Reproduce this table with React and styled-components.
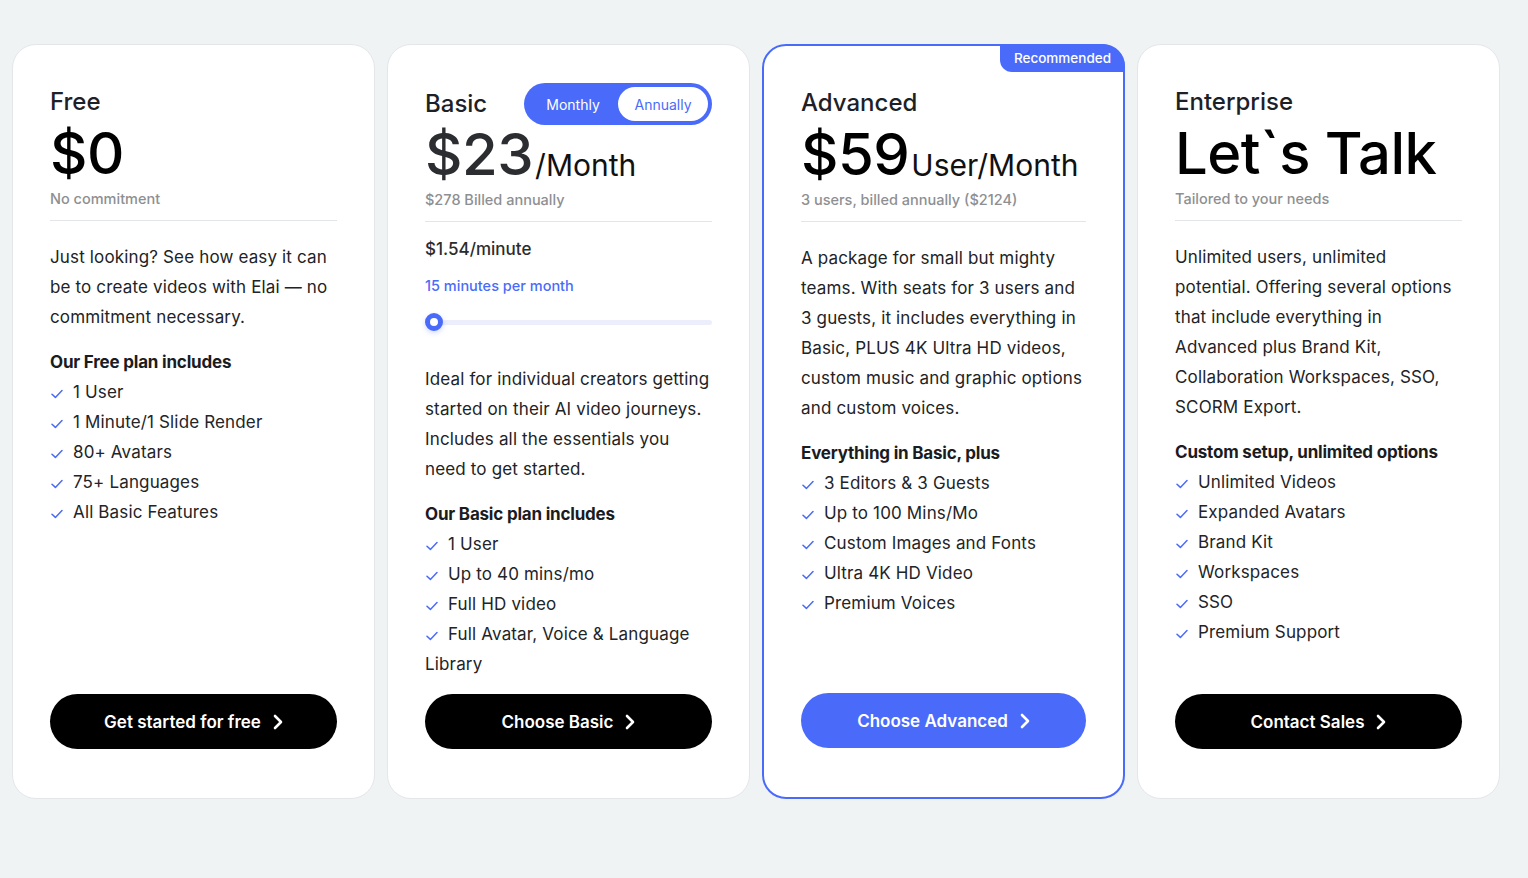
import React from "react";
import styled, { createGlobalStyle } from "styled-components";

const BLUE = "#4a6bfa";

const Global = createGlobalStyle`
  html, body { margin: 0; padding: 0; background: #f0f3f4; }
  body { font-family: Inter, "Noto Sans", sans-serif; color: #1d1f23; }
  * { box-sizing: border-box; }
`;

const Page = styled.div`
  display: grid;
  grid-template-columns: repeat(4, 363px);
  gap: 12px;
  padding: 44px 12px 79px;
`;

const Card = styled.div`
  position: relative;
  height: 755px;
  background: #fff;
  border: ${(p) => (p.$featured ? `2px solid ${BLUE}` : "1px solid #e4e7ea")};
  border-radius: 24px;
  padding: ${(p) => (p.$featured ? "41px 37px 49px" : "41px 37px 49px")};
  display: flex;
  flex-direction: column;
`;

const Badge = styled.div`
  position: absolute;
  top: -2px;
  right: -2px;
  height: 28px;
  padding: 0 14px 0 14px;
  display: flex;
  align-items: center;
  background: ${BLUE};
  color: #fff;
  font-size: 13.5px;
  font-weight: 500;
  border-radius: 0 22px 0 12px;
`;

const TitleRow = styled.div`
  display: flex;
  align-items: center;
  justify-content: space-between;
  height: ${(p) => (p.$tall ? "36px" : "32px")};
  margin-bottom: ${(p) => (p.$tall ? "-3px" : "0")};
`;

const Title = styled.div`
  font-size: 24px;
  font-weight: 500;
  line-height: 32px;
  color: #1d2127;
`;

const Toggle = styled.div`
  display: flex;
  align-items: center;
  width: 188px;
  height: 42px;
  border-radius: 21px;
  background: ${BLUE};
  padding: 4px;
`;

const ToggleOpt = styled.div`
  flex: 1;
  height: 100%;
  display: flex;
  align-items: center;
  justify-content: center;
  border-radius: 17px;
  font-size: 14px;
  font-weight: 400;
  background: ${(p) => (p.$active ? "#fff" : "transparent")};
  color: ${(p) => (p.$active ? BLUE : "#fff")};
`;

const PriceRow = styled.div`
  display: flex;
  align-items: baseline;
  margin-top: 2px;
  height: 66px;
`;

const Price = styled.span`
  font-size: 58px;
  font-weight: 500;
  line-height: 66px;
  letter-spacing: -0.5px;
  color: ${(p) => p.$color || "#000"};
`;

const Unit = styled.span`
  font-size: 30px;
  font-weight: 400;
  color: #111;
  margin-left: 2px;
  position: relative;
  top: 1px;
`;

const Sub = styled.div`
  margin-top: 3px;
  font-size: 14.5px;
  font-weight: 500;
  color: #8d8f92;
  line-height: 20px;
`;

const Divider = styled.hr`
  border: 0;
  border-top: 1px solid #e3e5e8;
  margin: 11px 0 0;
`;

const Rate = styled.div`
  margin-top: 16px;
  font-size: 17px;
  font-weight: 500;
  color: #2a2c30;
  line-height: 22px;
`;

const Minutes = styled.div`
  margin-top: 16px;
  font-size: 14.5px;
  font-weight: 500;
  color: ${BLUE};
  line-height: 20px;
`;

const Slider = styled.div`
  position: relative;
  margin-top: 17px;
  height: 18px;
  display: flex;
  align-items: center;
`;

const Track = styled.div`
  flex: 1;
  height: 5px;
  margin-left: 8px;
  border-radius: 3px;
  background: #eceefc;
`;

const Thumb = styled.div`
  position: absolute;
  left: 0;
  top: 0;
  width: 18px;
  height: 18px;
  border-radius: 50%;
  background: #fff;
  border: 5px solid ${BLUE};
  box-shadow: 0 2px 5px rgba(74, 107, 250, 0.25);
`;

const Desc = styled.p`
  margin: ${(p) => p.$mt || "21px"} 0 0;
  font-size: 17px;
  line-height: 30px;
  letter-spacing: 0.15px;
  color: #212326;
  font-weight: 400;
`;

const ListHead = styled.div`
  margin-top: 15px;
  font-size: 17px;
  font-weight: 700;
  line-height: 30px;
  color: #1a1c1f;
  letter-spacing: -0.2px;
`;

const List = styled.ul`
  list-style: none;
  margin: 0;
  padding: 0;
`;

const Item = styled.li`
  font-size: 17px;
  line-height: 30px;
  letter-spacing: 0.15px;
  color: #222428;
`;

const Check = styled.svg`
  width: 12px;
  height: 10px;
  margin: 0 10px 0 1px;
  vertical-align: -1px;
`;

const Button = styled.button`
  margin-top: auto;
  height: 55px;
  width: 100%;
  border: 0;
  border-radius: 28px;
  background: ${(p) => (p.$primary ? BLUE : "#000")};
  color: #fff;
  font-family: Inter, sans-serif;
  font-size: 17px;
  font-weight: 600;
  display: flex;
  align-items: center;
  justify-content: center;
  gap: 12px;
  cursor: pointer;
`;

const CheckIcon = () => (
  <Check viewBox="0 0 12 10">
    <polyline points="1,5.2 4.4,8.4 11,1.6" fill="none" stroke={BLUE} strokeWidth="1.5" strokeLinecap="round" strokeLinejoin="round" />
  </Check>
);

const Chevron = () => (
  <svg width="10" height="16" viewBox="0 0 10 16">
    <polyline points="2,2 8,8 2,14" fill="none" stroke="#fff" strokeWidth="2.6" strokeLinecap="round" strokeLinejoin="round" />
  </svg>
);

const Features = ({ head, items }) => (
  <>
    <ListHead>{head}</ListHead>
    <List>
      {items.map((t) => (
        <Item key={t}>
          <CheckIcon />
          {t}
        </Item>
      ))}
    </List>
  </>
);

export default function App() {
  return (
    <>
      <Global />
      <Page>
        <Card>
          <TitleRow>
            <Title>Free</Title>
          </TitleRow>
          <PriceRow>
            <Price>$0</Price>
          </PriceRow>
          <Sub>No commitment</Sub>
          <Divider />
          <Desc>
            Just looking? See how easy it can be to create videos with Elai — no commitment necessary.
          </Desc>
          <Features
            head="Our Free plan includes"
            items={["1 User", "1 Minute/1 Slide Render", "80+ Avatars", "75+ Languages", "All Basic Features"]}
          />
          <Button>
            Get started for free <Chevron />
          </Button>
        </Card>

        <Card>
          <TitleRow $tall>
            <Title>Basic</Title>
            <Toggle>
              <ToggleOpt>Monthly</ToggleOpt>
              <ToggleOpt $active>Annually</ToggleOpt>
            </Toggle>
          </TitleRow>
          <PriceRow>
            <Price $color="#2b2d31">$23</Price>
            <Unit>/Month</Unit>
          </PriceRow>
          <Sub>$278 Billed annually</Sub>
          <Divider />
          <Rate>$1.54/minute</Rate>
          <Minutes>15 minutes per month</Minutes>
          <Slider>
            <Thumb />
            <Track />
          </Slider>
          <Desc $mt="33px">
            Ideal for individual creators getting started on their AI video journeys. Includes all the essentials you need to get started.
          </Desc>
          <Features
            head="Our Basic plan includes"
            items={["1 User", "Up to 40 mins/mo", "Full HD video", "Full Avatar, Voice & Language Library"]}
          />
          <Button>
            Choose Basic <Chevron />
          </Button>
        </Card>

        <Card $featured>
          <Badge>Recommended</Badge>
          <TitleRow>
            <Title>Advanced</Title>
          </TitleRow>
          <PriceRow>
            <Price>$59</Price>
            <Unit>User/Month</Unit>
          </PriceRow>
          <Sub>3 users, billed annually ($2124)</Sub>
          <Divider />
          <Desc>
            A package for small but mighty teams. With seats for 3 users and 3 guests, it includes everything in Basic, PLUS 4K Ultra HD videos, custom music and graphic options and custom voices.
          </Desc>
          <Features
            head="Everything in Basic, plus"
            items={["3 Editors & 3 Guests", "Up to 100 Mins/Mo", "Custom Images and Fonts", "Ultra 4K HD Video", "Premium Voices"]}
          />
          <Button $primary>
            Choose Advanced <Chevron />
          </Button>
        </Card>

        <Card>
          <TitleRow>
            <Title>Enterprise</Title>
          </TitleRow>
          <PriceRow>
            <Price>Let`s Talk</Price>
          </PriceRow>
          <Sub>Tailored to your needs</Sub>
          <Divider />
          <Desc>
            Unlimited users, unlimited potential. Offering several options that include everything in Advanced plus Brand Kit, Collaboration Workspaces, SSO, SCORM Export.
          </Desc>
          <Features
            head="Custom setup, unlimited options"
            items={["Unlimited Videos", "Expanded Avatars", "Brand Kit", "Workspaces", "SSO", "Premium Support"]}
          />
          <Button>
            Contact Sales <Chevron />
          </Button>
        </Card>
      </Page>
    </>
  );
}
